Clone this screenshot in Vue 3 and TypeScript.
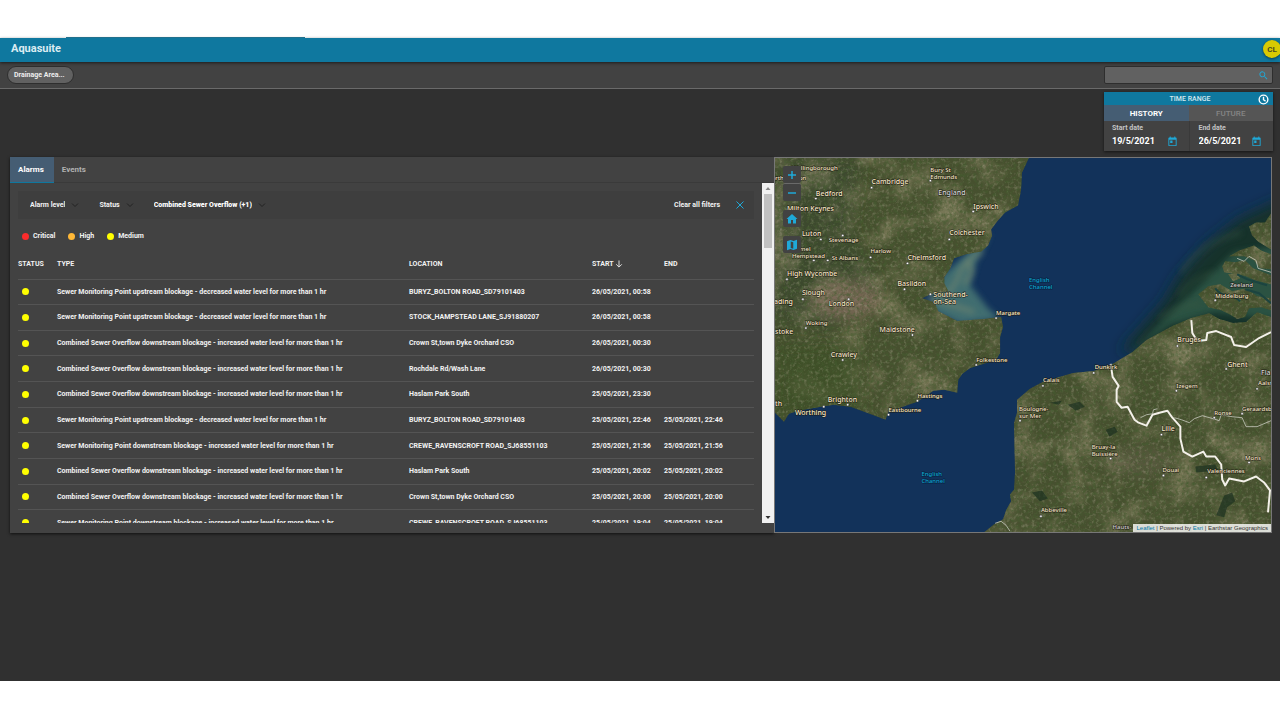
<script setup lang="ts">
import { ref } from 'vue'

interface Alarm {
  type: string
  location: string
  start: string
  end: string
}

interface Place {
  name: string[]
  x: number
  y: number
  size: number
  dot?: [number, number]
  kind?: string
}

const SMP_UP = 'Sewer Monitoring Point upstream blockage - decreased water level for more than 1 hr'
const SMP_DOWN = 'Sewer Monitoring Point downstream blockage - increased water level for more than 1 hr'
const CSO_DOWN = 'Combined Sewer Overflow downstream blockage - increased water level for more than 1 hr'

const alarms: Alarm[] = [
  { type: SMP_UP, location: 'BURYZ_BOLTON ROAD_SD79101403', start: '26/05/2021, 00:58', end: '' },
  { type: SMP_UP, location: 'STOCK_HAMPSTEAD LANE_SJ91880207', start: '26/05/2021, 00:58', end: '' },
  { type: CSO_DOWN, location: 'Crown St,town Dyke Orchard CSO', start: '26/05/2021, 00:30', end: '' },
  { type: CSO_DOWN, location: 'Rochdale Rd/Wash Lane', start: '26/05/2021, 00:30', end: '' },
  { type: CSO_DOWN, location: 'Haslam Park South', start: '25/05/2021, 23:30', end: '' },
  { type: SMP_UP, location: 'BURYZ_BOLTON ROAD_SD79101403', start: '25/05/2021, 22:46', end: '25/05/2021, 22:46' },
  { type: SMP_DOWN, location: 'CREWE_RAVENSCROFT ROAD_SJ68551103', start: '25/05/2021, 21:56', end: '25/05/2021, 21:56' },
  { type: CSO_DOWN, location: 'Haslam Park South', start: '25/05/2021, 20:02', end: '25/05/2021, 20:02' },
  { type: CSO_DOWN, location: 'Crown St,town Dyke Orchard CSO', start: '25/05/2021, 20:00', end: '25/05/2021, 20:00' },
  { type: SMP_DOWN, location: 'CREWE_RAVENSCROFT ROAD_SJ68551103', start: '25/05/2021, 19:04', end: '25/05/2021, 19:04' },
]

const levels = [
  { name: 'Critical', css: 'critical' },
  { name: 'High', css: 'high' },
  { name: 'Medium', css: 'medium' },
]

const places: Place[] = [
  { name: ['Wellingborough'], x: 791, y: 169, size: 6 },
  { name: ['Northampton'], x: 766, y: 179, size: 6 },
  { name: ['Bury St', 'Edmunds'], x: 930, y: 171, size: 6, dot: [930, 180] },
  { name: ['Cambridge'], x: 871, y: 183, size: 7, dot: [871, 187] },
  { name: ['England'], x: 938, y: 194, size: 7, kind: 'region' },
  { name: ['Bedford'], x: 815, y: 195, size: 7, dot: [815, 198] },
  { name: ['Ipswich'], x: 973, y: 208, size: 7, dot: [973, 211] },
  { name: ['Milton Keynes'], x: 786, y: 210, size: 7 },
  { name: ['Luton'], x: 801, y: 236, size: 7, dot: [820, 239] },
  { name: ['Stevenage'], x: 828, y: 242, size: 6, dot: [842, 235] },
  { name: ['Colchester'], x: 949, y: 235, size: 7, dot: [949, 239] },
  { name: ['Hemel', 'Hempstead'], x: 791, y: 251, size: 6, dot: [813, 260] },
  { name: ['St Albans'], x: 831, y: 260, size: 6, dot: [827, 260] },
  { name: ['Harlow'], x: 870, y: 253, size: 6, dot: [870, 257] },
  { name: ['Chelmsford'], x: 907, y: 260, size: 7, dot: [907, 263] },
  { name: ['High Wycombe'], x: 786, y: 276, size: 7, dot: [786, 279] },
  { name: ['Basildon'], x: 897, y: 286, size: 7, dot: [904, 289] },
  { name: ['Southend-', 'on-Sea'], x: 933, y: 297, size: 7, dot: [930, 294] },
  { name: ['Slough'], x: 801, y: 295, size: 7, dot: [802, 299] },
  { name: ['London'], x: 828, y: 306, size: 7, dot: [848, 299] },
  { name: ['ading'], x: 773, y: 304, size: 7 },
  { name: ['Margate'], x: 996, y: 315, size: 6, dot: [996, 318] },
  { name: ['Woking'], x: 805, y: 325, size: 6, dot: [805, 328] },
  { name: ['stoke'], x: 774, y: 334, size: 7 },
  { name: ['Maidstone'], x: 879, y: 332, size: 7, dot: [912, 335] },
  { name: ['Crawley'], x: 830, y: 357, size: 7, dot: [842, 360] },
  { name: ['Folkestone'], x: 976, y: 362, size: 6, dot: [976, 365] },
  { name: ['Hastings'], x: 917, y: 398, size: 6, dot: [917, 401] },
  { name: ['Brighton'], x: 827, y: 402, size: 7, dot: [847, 405] },
  { name: ['th'], x: 774, y: 406, size: 7 },
  { name: ['Worthing'], x: 794, y: 415, size: 7, dot: [823, 407] },
  { name: ['Eastbourne'], x: 888, y: 412, size: 6, dot: [888, 415] },
  { name: ['English', 'Channel'], x: 1029, y: 282, size: 6, kind: 'sea' },
  { name: ['English', 'Channel'], x: 921, y: 477, size: 6, kind: 'sea' },
  { name: ['Zeeland'], x: 1231, y: 287, size: 6, kind: 'region' },
  { name: ['Middelburg'], x: 1216, y: 298, size: 6, dot: [1216, 300] },
  { name: ['Bruges'], x: 1178, y: 342, size: 7, dot: [1178, 346] },
  { name: ['Ghent'], x: 1228, y: 367, size: 7, dot: [1227, 369] },
  { name: ['Fla'], x: 1262, y: 375, size: 7, kind: 'region' },
  { name: ['Aalst'], x: 1259, y: 385, size: 6, dot: [1258, 389] },
  { name: ['Izegem'], x: 1177, y: 388, size: 6, dot: [1177, 391] },
  { name: ['Dunkirk'], x: 1095, y: 369, size: 6, dot: [1094, 373] },
  { name: ['Calais'], x: 1043, y: 382, size: 6, dot: [1043, 386] },
  { name: ['Boulogne-', 'sur Mer'], x: 1019, y: 411, size: 6, dot: [1020, 421] },
  { name: ['Ronse'], x: 1215, y: 415, size: 6, dot: [1215, 418] },
  { name: ['Geraardsbergen'], x: 1243, y: 411, size: 6, dot: [1243, 414] },
  { name: ['Lille'], x: 1162, y: 431, size: 7, dot: [1162, 435] },
  { name: ['Bruay-la', 'Buissière'], x: 1092, y: 449, size: 6, dot: [1111, 459] },
  { name: ['Mons'], x: 1246, y: 460, size: 6, dot: [1250, 463] },
  { name: ['Douai'], x: 1163, y: 473, size: 6, dot: [1164, 476] },
  { name: ['Valenciennes'], x: 1208, y: 474, size: 6, dot: [1207, 478] },
  { name: ['Abbeville'], x: 1041, y: 513, size: 6, dot: [1041, 517] },
  { name: ['Hauts-'], x: 1113, y: 530, size: 6, kind: 'region' },
]

const rangeTab = ref('history')
const listTab = ref('alarms')
const query = ref('')
const startDate = ref('19/5/2021')
const endDate = ref('26/5/2021')
</script>

<template>
  <div class="page">
    <div class="app">
      <header class="topbar">
        <h1>Aquasuite</h1>
        <button class="avatar" type="button" aria-label="Account CL">CL</button>
      </header>

      <div class="toolbar">
        <button class="chip" type="button">Drainage Area...</button>
        <form class="search" role="search" @submit.prevent>
          <input v-model="query" type="text" aria-label="Search" />
          <button type="submit" aria-label="Run search">
            <svg viewBox="0 0 24 24"><path d="M15.5 14h-.8l-.3-.3A6.5 6.5 0 1 0 13.700 14.400l.3.3v.8l5 5 1.500-1.500zm-6 0a4.500 4.500 0 1 1 0-9 4.500 4.500 0 0 1 0 9z" /></svg>
          </button>
        </form>
      </div>

      <section class="range" aria-label="Time range">
        <div class="range-head">
          <h2>TIME RANGE</h2>
          <svg viewBox="0 0 24 24" class="clock"><circle cx="12" cy="12" r="9.500" /><path d="M12 6v6.500l4.500 3" /></svg>
        </div>
        <div class="range-tabs" role="tablist">
          <button type="button" role="tab" :class="{ on: rangeTab === 'history' }" @click="rangeTab = 'history'">HISTORY</button>
          <button type="button" role="tab" :class="{ on: rangeTab === 'future' }" @click="rangeTab = 'future'">FUTURE</button>
        </div>
        <div class="dates">
          <div class="date">
            <label for="start-date">Start date</label>
            <div class="date-line">
              <input id="start-date" v-model="startDate" type="text" />
              <button type="button" aria-label="Pick start date">
                <svg viewBox="0 0 24 24"><path d="M19 3h-1V1h-2v2H8V1H6v2H5a2 2 0 0 0-2 2v15a2 2 0 0 0 2 2h14a2 2 0 0 0 2-2V5a2 2 0 0 0-2-2zm0 17H5V8h14zM7 10h5v5H7z" /></svg>
              </button>
            </div>
          </div>
          <div class="date">
            <label for="end-date">End date</label>
            <div class="date-line">
              <input id="end-date" v-model="endDate" type="text" />
              <button type="button" aria-label="Pick end date">
                <svg viewBox="0 0 24 24"><path d="M19 3h-1V1h-2v2H8V1H6v2H5a2 2 0 0 0-2 2v15a2 2 0 0 0 2 2h14a2 2 0 0 0 2-2V5a2 2 0 0 0-2-2zm0 17H5V8h14zM7 10h5v5H7z" /></svg>
              </button>
            </div>
          </div>
        </div>
      </section>

      <main class="panels">
        <section class="card">
          <div class="tabs" role="tablist">
            <button type="button" role="tab" :class="{ on: listTab === 'alarms' }" @click="listTab = 'alarms'">Alarms</button>
            <button type="button" role="tab" :class="{ on: listTab === 'events' }" @click="listTab = 'events'">Events</button>
          </div>
          <div class="body">
            <div class="list">
              <div class="filters">
                <label class="filter">
                  <select aria-label="Alarm level"><option>Alarm level</option></select>
                  <svg viewBox="0 0 8 8"><path d="M1 2.500l3 3 3-3" /></svg>
                </label>
                <label class="filter">
                  <select aria-label="Status"><option>Status</option></select>
                  <svg viewBox="0 0 8 8"><path d="M1 2.500l3 3 3-3" /></svg>
                </label>
                <label class="filter strong">
                  <select aria-label="Type"><option>Combined Sewer Overflow (+1)</option></select>
                  <svg viewBox="0 0 8 8"><path d="M1 2.500l3 3 3-3" /></svg>
                </label>
                <button class="clear" type="button">
                  Clear all filters
                  <svg viewBox="0 0 8 8"><path d="M.5.5l7 7M7.500.5l-7 7" /></svg>
                </button>
              </div>
              <ul class="legend">
                <li v-for="l in levels" :key="l.css"><i class="dot" :class="l.css"></i>{{ l.name }}</li>
              </ul>
              <table>
                <colgroup>
                  <col class="c-status" /><col /><col class="c-location" /><col class="c-start" /><col class="c-end" />
                </colgroup>
                <thead>
                  <tr>
                    <th>STATUS</th>
                    <th>TYPE</th>
                    <th>LOCATION</th>
                    <th>START <svg viewBox="0 0 8 8" class="sort"><path d="M4 .5v6.500M1.200 4.300L4 7.100l2.800-2.800" /></svg></th>
                    <th>END</th>
                  </tr>
                </thead>
                <tbody>
                  <tr v-for="(a, i) in alarms" :key="i">
                    <td class="lamp"><i class="dot medium" role="img" aria-label="Medium"></i></td>
                    <td>{{ a.type }}</td>
                    <td>{{ a.location }}</td>
                    <td>{{ a.start }}</td>
                    <td>{{ a.end }}</td>
                  </tr>
                </tbody>
              </table>
            </div>
            <div class="scrollbar" aria-hidden="true">
              <svg viewBox="0 0 11 11" class="up"><path d="M3 7l2.500-3L8 7z" /></svg>
              <div class="thumb"></div>
              <svg viewBox="0 0 11 11" class="down"><path d="M3 4l2.500 3L8 4z" /></svg>
            </div>
          </div>
        </section>

        <section class="map" aria-label="Map">
          <svg class="tiles" viewBox="774 157 498 376" preserveAspectRatio="xMidYMid slice">
            <defs>
              <filter id="grain" x="0" y="0" width="1" height="1">
                <feTurbulence type="fractalNoise" baseFrequency="0.3" numOctaves="3" seed="4" />
                <feColorMatrix values="0 0 0 0 0.06  0 0 0 0 0.11  0 0 0 0 0.03  2.400 0 0 0 -1" />
              </filter>
              <filter id="light" x="0" y="0" width="1" height="1">
                <feTurbulence type="fractalNoise" baseFrequency="0.28" numOctaves="3" seed="19" />
                <feColorMatrix values="0 0 0 0 0.5  0 0 0 0 0.46  0 0 0 0 0.34  0 2.200 0 0 -1.100" />
              </filter>
              <filter id="patch" x="0" y="0" width="1" height="1">
                <feTurbulence type="fractalNoise" baseFrequency="0.03" numOctaves="4" seed="8" />
                <feColorMatrix values="0 0 0 0 0.38  0 0 0 0 0.33  0 0 0 0 0.2  2.600 0 0 0 -1.150" />
              </filter>
              <filter id="soft" x="-0.5" y="-0.5" width="2" height="2"><feGaussianBlur stdDeviation="7" /></filter>
              <filter id="haze" x="-0.5" y="-0.5" width="2" height="2"><feGaussianBlur stdDeviation="3" /></filter>
              <clipPath id="land">
                <path d="M774 157H1029L1022 172 1021 190 1018 205 1005 212 997 221 991 229 992 235 988 245 981 251 966 254 954 258 950 268 944 277 944 283 948 291 930 294 922 298 934 302 938 311 957 321 983 319 1001 317 1003 327 1000 337 1000 353 996 360 970 368 962 374 958 380 957 393 944 390 933 391 917 402 888 412 885 420 877 417 850 407 833 405 820 407 797 411 788 414 783 422 774 413Z" />
                <path d="M984 533L994 525 1003 520 1006 511 1011 502 1010 495 1014 490 1015 473 1014 423 1017 413 1017 400 1030 389 1043 382 1073 373 1094 371 1111 365 1133 352 1147 340 1173 326 1192 318 1210 313 1220 319 1234 323 1247 322 1258 312 1272 317V533Z" />
                <path d="M1199 294L1209 286 1221 284 1233 291 1247 288 1258 296 1272 298V310L1262 307 1250 308 1246 317 1238 319 1230 314 1222 310 1209 307Z" />
                <path d="M1223 266L1226 261 1236 262 1246 260 1254 268 1272 275V284L1256 280 1247 276 1239 274 1225 272Z" />
                <path d="M1230 256L1240 250 1255 245 1262 250 1272 254V269L1261 268 1255 260 1245 256Z" />
                <path d="M1250 226L1257 222 1266 222 1272 213V249L1259 241 1253 235Z" />
                <path d="M1229 274L1238 273 1241 278 1234 281Z" />
              </clipPath>
            </defs>
            <rect x="774" y="157" width="498" height="376" fill="#12325a" />
            <path d="M1290 195L1240 218 1208 243 1180 275 1164 302 1120 352 1150 350 1290 340Z" fill="#12302c" filter="url(#soft)" />
            <path d="M1280 245L1235 252 1208 278 1180 304 1150 335 1130 354 1170 325 1215 312 1280 320Z" fill="#315d4c" opacity=".75" filter="url(#haze)" />
            <path d="M1182 272q18-30 60-40M1180 296q10-16 34-24M1160 318q26-16 42-14" fill="none" stroke="#3d5a42" stroke-width="3" opacity=".6" filter="url(#haze)" />
            <path d="M991 232L976 262 970 285 988 308 1000 319 960 324 934 312 930 296 942 275Z" fill="#4a7875" opacity=".85" filter="url(#haze)" />
            <path d="M983 252q-18 6-24 22t-14 20M968 262q8 10-4 22M926 298q22 6 48 14" fill="none" stroke="#8a9270" stroke-width="3" opacity=".7" filter="url(#haze)" />
            <g clip-path="url(#land)">
              <rect x="774" y="157" width="498" height="376" fill="#47502f" />
              <path d="M774 157H860L850 230 880 290 830 330 774 320Z" fill="#3c4a2e" filter="url(#soft)" />
              <rect x="774" y="157" width="498" height="376" filter="url(#patch)" opacity=".5" />
              <ellipse cx="845" cy="300" rx="35" ry="20" fill="#85705e" opacity=".8" filter="url(#soft)" />
              <path d="M774 345H860V415H774Z" fill="#3e4f25" opacity=".7" filter="url(#soft)" />
              <ellipse cx="1140" cy="462" rx="35" ry="15" fill="#66604c" opacity=".55" filter="url(#soft)" />
              <rect x="774" y="157" width="498" height="376" filter="url(#grain)" opacity=".75" />
              <rect x="774" y="157" width="498" height="376" filter="url(#light)" opacity=".4" />
              <path d="M1068 405l12-3 5 5-9 4zM1106 430l9-3 3 5-8 5zM1032 493l10-2 6 8-8 3zM1196 467l20-2 3 6-22 2zM1225 496l8-3 3 9-8 6-3 10-8-2zM1050 403l12-2-3 4z" fill="#1b3020" opacity=".7" />
            </g>
            <path d="M1216 288q4 6 12 7t13 6M1246 289l14 4 12 10M1238 274l10 5 20 6" fill="none" stroke="#1c4440" stroke-width="2" />
            <path class="border" d="M1111 364L1113 377 1119 386 1117 390 1117 402 1122 408 1128 407 1135 420 1139 423 1147 426 1153 415 1160 413 1168 411 1173 418 1181 427 1181 439 1184 452 1193 457 1204 452 1207 457 1216 457 1222 465 1223 480 1226 486 1230 479 1245 482 1257 477 1265 483 1271 491 1269 513" />
            <path class="border" d="M1192 320L1193 333 1198 341 1207 340 1208 333 1217 331 1232 337 1235 345 1247 347 1260 338 1272 332" />
            <path class="thin" d="M1175 418L1182 420 1190 423 1195 419 1203 416 1214 419 1220 421 1222 415 1233 417 1243 418 1247 427 1258 427 1272 421M1141 418l6-3 6-1 1-4 4-1M1238 258l7 3 5-5 7 4 2 8 13 4M995 524l6-2 5 4 4 6" />
            <g v-for="(p, i) in places" :key="i">
              <text :class="p.kind" :x="p.x" :y="p.y" :font-size="p.size">
                <tspan v-for="(line, n) in p.name" :key="n" :x="p.x" :dy="n ? 7 : 0">{{ line }}</tspan>
              </text>
              <circle v-if="p.dot" :cx="p.dot[0]" :cy="p.dot[1]" r="1.200" />
            </g>
          </svg>
          <div class="controls">
            <div class="zoom">
              <button type="button" aria-label="Zoom in"><svg viewBox="0 0 24 24"><path d="M10.500 4h3v6.500H20v3h-6.500V20h-3v-6.500H4v-3h6.500z" /></svg></button>
              <button type="button" aria-label="Zoom out"><svg viewBox="0 0 24 24"><path d="M4 10.500h16v3H4z" /></svg></button>
            </div>
            <button type="button" aria-label="Home"><svg viewBox="0 0 24 24"><path d="M10 21v-7h4v7h6v-9h3L12 2 1 12h3v9z" /></svg></button>
            <button type="button" aria-label="Layers"><svg viewBox="0 0 24 24"><path fill-rule="evenodd" d="M22 1.500L15 4 9 2 2 4.500v18L9 20l6 2 7-2.500zM9.500 4.800l5 1.700v13l-5-1.700z" /></svg></button>
          </div>
          <p class="credit"><a href="#leaflet">Leaflet</a> | Powered by <a href="#esri">Esri</a> | Earthstar Geographics</p>
        </section>
      </main>
    </div>
  </div>
</template>

<style>
body {
  margin: 0;
  background: #fff;
}
</style>

<style scoped>
* {
  box-sizing: border-box;
}
.page {
  display: flex;
  min-height: 100vh;
  padding: 38px 0 39px;
  overflow-x: hidden;
  font-family: Roboto, "Liberation Sans", sans-serif;
  font-size: 7px;
  font-weight: 700;
  color: #f2f2f2;
}
.app {
  flex: 1;
  min-width: 0;
  display: flex;
  flex-direction: column;
  background: #303030;
}
button,
input,
select {
  font: inherit;
  color: inherit;
  border: 0;
  padding: 0;
  margin: 0;
  background: none;
  border-radius: 0;
}
button {
  cursor: pointer;
}
h1,
h2,
p,
ul {
  margin: 0;
  padding: 0;
}
svg {
  display: block;
}
.topbar {
  position: relative;
  z-index: 1;
  display: flex;
  align-items: center;
  justify-content: space-between;
  height: 24px;
  padding-left: 11px;
  background: #0f789f;
  box-shadow: 0 1px 3px rgba(0, 0, 0, 0.6);
}
.topbar::before {
  content: "";
  position: absolute;
  top: -1px;
  left: 66px;
  width: 239px;
  height: 1px;
  background: #22708c;
}
h1 {
  font-size: 11px;
  line-height: 20px;
  padding-bottom: 2px;
  font-weight: 700;
  color: #dcecf2;
}
.avatar {
  width: 18px;
  height: 18px;
  margin: 0 -1px 2px 0;
  border-radius: 50%;
  background: #d8ca02;
  color: #4a4a20;
  font-size: 8px;
  box-shadow: 0 1px 3px rgba(0, 0, 0, 0.5);
}
.toolbar {
  display: flex;
  align-items: center;
  justify-content: space-between;
  height: 27px;
  padding: 0 7px;
  background: #424242;
  border-bottom: 1px solid #6a6a6a;
}
.chip {
  height: 18px;
  padding: 0 8px 0 6px;
  border: 1px solid #2e2e2e;
  border-radius: 9px;
  background: #616161;
  color: #eee;
}
.search {
  display: flex;
  align-items: center;
  width: 169px;
  height: 18px;
  border: 1px solid #2e2e2e;
  border-radius: 2px;
  background: #616161;
}
.search input {
  flex: 1;
  min-width: 0;
  padding: 0 4px;
  outline: 0;
}
.search button svg {
  width: 11px;
  height: 11px;
  margin-right: 3px;
  fill: #1fa9d8;
}
.range {
  align-self: flex-end;
  width: 169px;
  margin: 3px 7px 6px 0;
  background: #424242;
  box-shadow: 0 1px 3px rgba(0, 0, 0, 0.6);
}
.range-head {
  position: relative;
  height: 13px;
  background: #0f789f;
}
h2 {
  font-size: 7px;
  line-height: 14px;
  font-weight: 500;
  text-align: center;
  padding-left: 3px;
  color: #d5e9f0;
}
.clock {
  position: absolute;
  right: 4px;
  top: 2px;
  width: 11px;
  height: 11px;
  fill: none;
  stroke: #fff;
  stroke-width: 3;
}
.range-tabs {
  display: grid;
  grid-template-columns: 1fr 1fr;
}
.range-tabs button {
  height: 16px;
  font-size: 8px;
  font-weight: 500;
  background: #555;
  color: #858585;
}
.range-tabs .on {
  background: #455d73;
  color: #fff;
  font-weight: 700;
}
.dates {
  display: grid;
  grid-template-columns: 1fr 1fr;
  height: 30px;
}
.date {
  padding: 3px 11px 0 8px;
}
.date + .date {
  padding-left: 9px;
  border-left: 1px solid #3a3a3a;
}
.date label {
  display: block;
  line-height: 9px;
  color: #c4c4c4;
}
.date-line {
  display: flex;
  align-items: center;
  justify-content: space-between;
}
.date-line input {
  width: 46px;
  height: 16px;
  font-size: 9px;
  color: #fff;
  outline: 0;
}
.date-line svg {
  width: 11px;
  height: 11px;
  fill: #1fa9d8;
}
.panels {
  display: grid;
  grid-template-columns: 764fr 498fr;
  padding: 0 8px 0 10px;
}
.card {
  display: flex;
  flex-direction: column;
  min-width: 0;
  height: 376px;
  background: #424242;
  box-shadow: 0 1px 3px rgba(0, 0, 0, 0.7);
}
.tabs {
  display: flex;
  height: 26px;
  border-bottom: 1px solid #3a3a3a;
}
.tabs button {
  padding: 0 10px 0 8px;
  font-size: 8px;
  color: #b0b0b0;
}
.tabs .on {
  height: 26px;
  color: #fff;
  background: #455d73;
  border-bottom: 1px solid #0f789f;
}
.body {
  display: flex;
  height: 340px;
}
.list {
  flex: 1;
  min-width: 0;
  overflow: hidden;
  padding: 8px 8px 0;
}
.filters {
  display: flex;
  align-items: center;
  height: 28px;
  padding: 0 10px 0 12px;
  background: #3e3e3e;
}
.filter {
  display: flex;
  align-items: center;
  gap: 6px;
  margin-right: 20px;
}
.filter select {
  appearance: none;
  field-sizing: content;
  outline: 0;
}
.filter svg {
  width: 8px;
  height: 8px;
  fill: none;
  stroke: #222;
}
.filter.strong {
  font-weight: 900;
  color: #fff;
}
.clear {
  display: flex;
  align-items: center;
  gap: 16px;
  margin-left: auto;
}
.clear svg {
  width: 8px;
  height: 8px;
  fill: none;
  stroke: #1fa9d8;
}
.legend {
  display: flex;
  align-items: center;
  gap: 13px;
  height: 30px;
  padding: 4px 4px 0;
  list-style: none;
}
.legend li {
  display: flex;
  align-items: center;
  gap: 4px;
}
.dot {
  display: block;
  width: 7px;
  height: 7px;
  border-radius: 50%;
}
.critical {
  background: #fb2c2c;
}
.high {
  background: #ffb837;
}
.medium {
  background: #ff0;
}
table {
  width: 100%;
  height: 287px;
  table-layout: fixed;
  border-collapse: collapse;
}
th,
td {
  padding: 0;
  text-align: left;
  white-space: nowrap;
  border-bottom: 1px solid #545454;
}
th {
  height: 30px;
}
td {
  height: 25px;
}
.c-status {
  width: 39px;
}
.c-location {
  width: 183px;
}
.c-start {
  width: 72px;
}
.c-end {
  width: 90px;
}
.lamp {
  padding-left: 4px;
}
.sort {
  display: inline-block;
  vertical-align: middle;
  width: 8px;
  height: 8px;
  fill: none;
  stroke: #ddd;
}
.scrollbar {
  display: flex;
  flex-direction: column;
  width: 12px;
  background: #f1f1f1;
}
.scrollbar svg {
  width: 12px;
  height: 11px;
  fill: #8a8a8a;
}
.scrollbar .down {
  margin-top: auto;
  fill: #333;
}
.thumb {
  height: 54px;
  margin: 0 2px;
  background: #c1c1c1;
}
.map {
  position: relative;
  min-width: 0;
  border: 1px solid #777;
  overflow: hidden;
}
.tiles {
  position: absolute;
  inset: 0;
  width: 100%;
  height: 100%;
}
.tiles text {
  font-family: "Noto Sans", "DejaVu Sans", sans-serif;
  font-weight: 500;
  fill: #fbeccb;
  stroke: #1d1a12;
  stroke-width: 1;
  paint-order: stroke;
}
.tiles .region {
  fill: #d8d8d8;
}
.tiles .sea {
  fill: #10a5cf;
  stroke: #06203f;
}
.tiles circle {
  fill: #fff;
  stroke: #222;
  stroke-width: 0.5;
}
.border {
  fill: none;
  stroke: #f4f1ea;
  stroke-width: 2;
  stroke-linejoin: round;
}
.thin {
  fill: none;
  stroke: #c9cbc0;
  stroke-width: 1;
  opacity: 0.8;
}
.controls {
  position: absolute;
  left: 8px;
  top: 8px;
  display: grid;
  gap: 9px;
}
.controls button {
  display: grid;
  place-items: center;
  width: 18px;
  height: 17px;
  background: #424242;
  border-radius: 2px;
}
.zoom button + button {
  height: 18px;
  border-top: 1px solid #6a6a6a;
}
.controls svg {
  width: 12px;
  height: 12px;
  fill: #1fa9d8;
}
.credit {
  position: absolute;
  right: 0;
  bottom: 0;
  padding: 0 3px;
  font-family: "Liberation Sans", sans-serif;
  font-size: 6px;
  line-height: 8px;
  font-weight: 400;
  color: #333;
  background: rgba(255, 255, 255, 0.8);
}
.credit a {
  color: #0078a8;
  text-decoration: none;
}
</style>
